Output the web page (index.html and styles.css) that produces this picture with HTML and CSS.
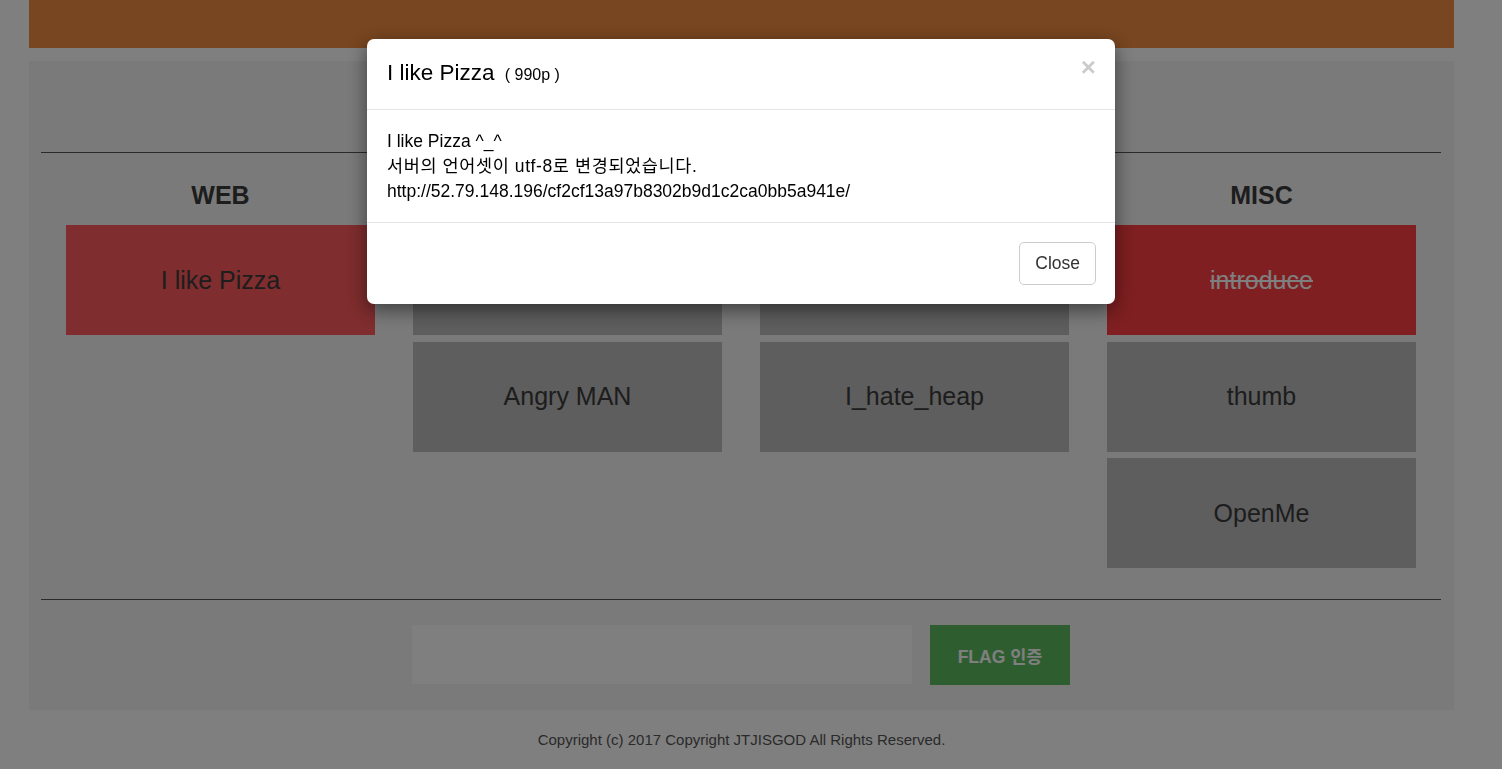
FILE: index.html
```html
<!DOCTYPE html>
<html lang="ko">
<head>
<meta charset="utf-8">
<title>JTJISGOD CTF</title>
<link rel="stylesheet" href="styles.css">
</head>
<body>
<div class="page">
  <header class="topbar"></header>
  <main class="panel">
    <div class="panel-head"></div>
    <hr class="rule">
    <section class="categories">
      <div class="category">
        <h2 class="cat-title">WEB</h2>
        <div class="card card-open">I like Pizza</div>
      </div>
      <div class="category">
        <h2 class="cat-title"></h2>
        <div class="card"></div>
        <div class="card">Angry MAN</div>
      </div>
      <div class="category">
        <h2 class="cat-title"></h2>
        <div class="card"></div>
        <div class="card">I_hate_heap</div>
      </div>
      <div class="category">
        <h2 class="cat-title">MISC</h2>
        <div class="card card-solved"><s>introduce</s></div>
        <div class="card">thumb</div>
        <div class="card">OpenMe</div>
      </div>
    </section>
    <hr class="rule">
    <form class="flag-row">
      <input class="flag-input" type="text" aria-label="flag">
      <button class="flag-btn" type="button">FLAG 인증</button>
    </form>
  </main>
  <footer class="footer">Copyright (c) 2017 Copyright JTJISGOD All Rights Reserved.</footer>
</div>

<div class="backdrop"></div>
<div class="modal">
  <div class="modal-dialog">
    <div class="modal-content">
      <div class="modal-header">
        <span class="modal-close">×</span>
        <h4 class="modal-title">I like Pizza <small class="points">( 990p )</small></h4>
      </div>
      <div class="modal-body">
        I like Pizza ^_^<br>
        <span class="ko">서버의 언어셋이 utf-8로 변경되었습니다.</span><br>
        http://52.79.148.196/cf2cf13a97b8302b9d1c2ca0bb5a941e/
      </div>
      <div class="modal-footer">
        <button class="btn-close" type="button">Close</button>
      </div>
    </div>
  </div>
</div>
</body>
</html>
```
FILE: styles.css
```css
* { box-sizing: border-box; }

html, body {
  margin: 0;
  padding: 0;
  background: #ffffff;
  font-family: "Liberation Sans", "Noto Sans CJK KR", Arial, sans-serif;
  color: #333;
  overflow: hidden;
}

.page {
  width: 1425px;
  margin-left: 29px;
}

.topbar {
  height: 48px;
  background: #f08c40;
  margin-bottom: 13px;
}

.panel {
  background: #f4f4f4;
  padding: 0 13px 25px 12px;
}

.panel-head {
  height: 91px;
}

.rule {
  margin: 0;
  border: 0;
  height: 1px;
  background: #555;
}

.categories {
  display: grid;
  grid-template-columns: repeat(4, 309px);
  column-gap: 38px;
  justify-content: center;
  padding: 27px 0 31px;
  align-items: start;
}

.category {
  display: flex;
  flex-direction: column;
  gap: 6.5px;
}

.cat-title {
  margin: 0 0 8.5px;
  height: 30px;
  line-height: 30px;
  font-size: 25px;
  font-weight: bold;
  text-align: center;
  color: #3a3a3a;
}

.card {
  height: 110px;
  background: #bcbcbc;
  display: flex;
  align-items: center;
  justify-content: center;
  font-size: 25px;
  color: #3a3a3a;
}

.card-open {
  background: #fe5a5c;
}

.card-solved {
  background: #fe3e42;
  color: #ffffff;
}

.card-solved s {
  text-decoration-thickness: 2px;
}

.flag-row {
  display: flex;
  justify-content: center;
  align-items: flex-start;
  gap: 18px;
  margin: 25px 0 0;
}

.flag-input {
  width: 500px;
  height: 59px;
  border: 0;
  background: #ffffff;
  margin: 0;
  padding: 0 12px;
  font: inherit;
}

.flag-btn {
  width: 140px;
  height: 60px;
  border: 0;
  margin: 0;
  background: #5cbc60;
  color: #ffffff;
  font-family: "Liberation Sans", "Noto Sans CJK KR", sans-serif;
  font-size: 17.5px;
  font-weight: bold;
}

.footer {
  height: 59px;
  line-height: 60px;
  text-align: center;
  font-size: 15px;
  color: #555;
}

/* modal */
.backdrop {
  position: fixed;
  inset: 0;
  background: rgba(0, 0, 0, 0.5);
}

.modal {
  position: fixed;
  inset: 0;
}

.modal-dialog {
  width: 748px;
  margin: 39px 0 0 367px;
}

.modal-content {
  background: #fff;
  border-radius: 7px;
  box-shadow: 0 6px 19px rgba(0, 0, 0, 0.5);
  overflow: hidden;
}

.modal-header {
  padding: 18px 20px 18px;
  border-bottom: 1px solid #e5e5e5;
}

.modal-title {
  margin: 0;
  font-size: 22.5px;
  font-weight: normal;
  line-height: 32px;
  color: #000;
}

.points {
  font-size: 16px;
  margin-left: 4px;
  color: #000;
}

.modal-close {
  float: right;
  font-size: 26px;
  font-weight: bold;
  line-height: 1;
  color: #000;
  opacity: 0.2;
  margin-top: -3px;
  margin-right: -1px;
}

.modal-body {
  padding: 18.5px 20px 18.5px;
  font-size: 17.5px;
  line-height: 25px;
  color: #000;
  border-bottom: 1px solid #e5e5e5;
}

.ko {
  letter-spacing: 0.6px;
}

.modal-footer {
  display: flex;
  justify-content: flex-end;
  padding: 19px 19px 19px;
}

.btn-close {
  height: 42.5px;
  padding: 0 15px;
  background: #fff;
  border: 1.25px solid #ccc;
  border-radius: 5px;
  font-family: "Liberation Sans", sans-serif;
  font-size: 17.5px;
  color: #333;
}
```
